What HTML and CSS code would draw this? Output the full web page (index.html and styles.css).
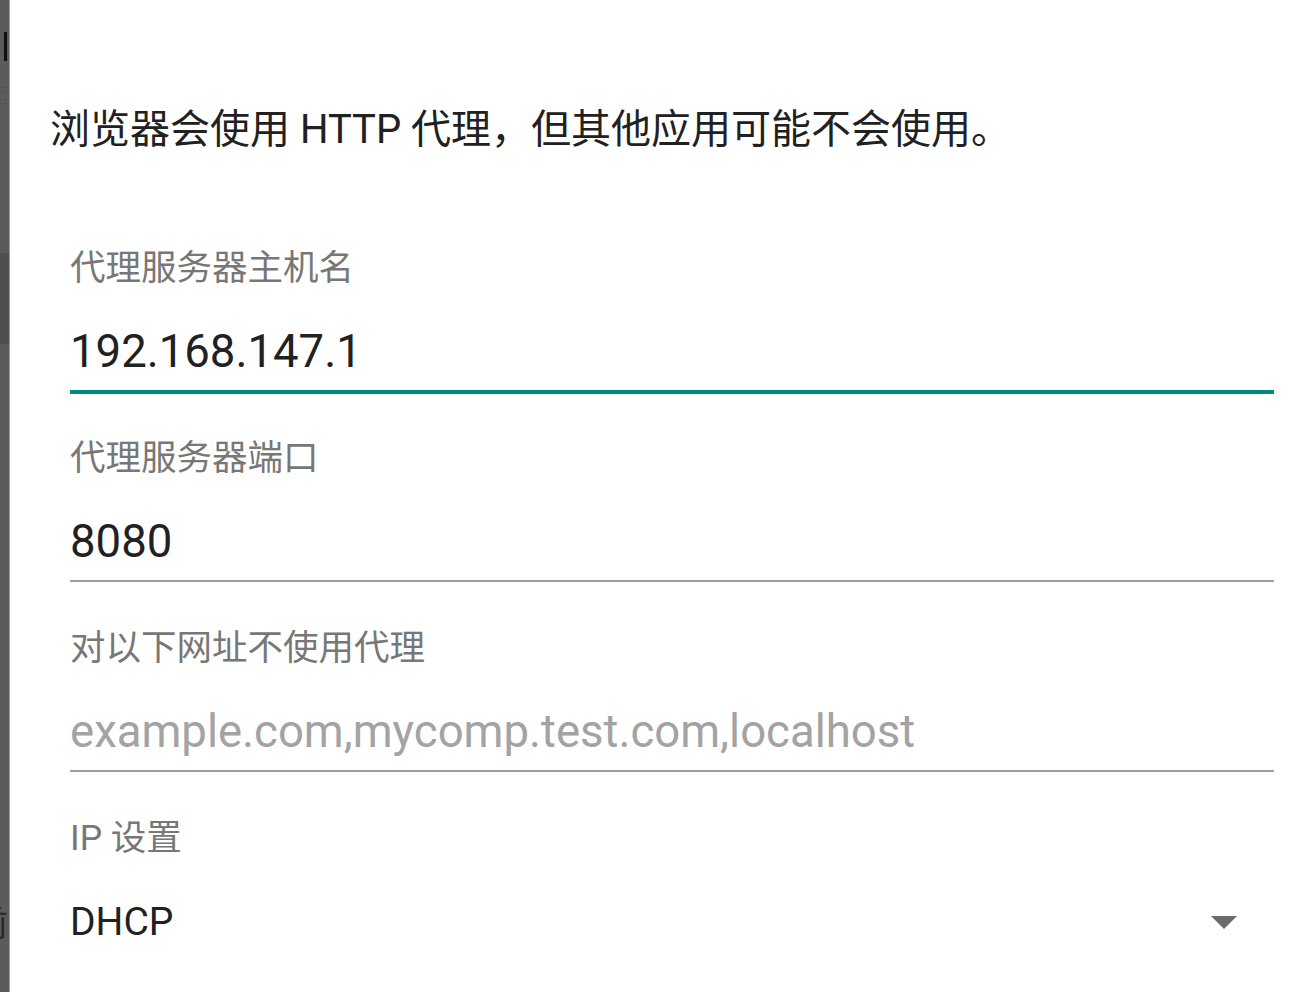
FILE: index.html
```html
<!DOCTYPE html>
<html lang="zh-CN">
<head>
    <meta charset="UTF-8">
    <meta name="viewport" content="width=device-width, initial-scale=1.0">
    <title>代理设置</title>
    <link rel="stylesheet" href="styles.css">
</head>
<body>

<div class="screen">
    <div class="backdrop">
        <div class="behind-bar"></div>
        <div class="behind-dots">: :<br>: :</div>
        <div class="behind-shade"></div>
        <div class="behind-glyph"><span>前</span></div>
    </div>

    <div class="dialog">
        <p class="note">浏览器会使用 HTTP 代理，但其他应用可能不会使用。</p>

        <div class="field focused">
            <div class="label">代理服务器主机名</div>
            <div class="value">192.168.147.1</div>
        </div>

        <div class="field">
            <div class="label">代理服务器端口</div>
            <div class="value">8080</div>
        </div>

        <div class="field">
            <div class="label">对以下网址不使用代理</div>
            <div class="value placeholder">example.com,mycomp.test.com,localhost</div>
        </div>

        <div class="field spinner">
            <div class="label">IP 设置</div>
            <div class="spinner-row">
                <div class="value">DHCP</div>
                <svg class="arrow" width="26" height="13" viewBox="0 0 26 13">
                    <path d="M0 0 H26 L13 13 Z" fill="#6b6b6b"/>
                </svg>
            </div>
        </div>
    </div>
</div>

</body>
</html>
```

FILE: styles.css
```css
body {
    margin: 0;
    background-color: #ffffff;
    font-family: Roboto, "Noto Sans CJK SC", sans-serif;
    overflow: hidden;
}
.screen {
    display: flex;
    width: 1300px;
    height: 992px;
}
.backdrop {
    width: 9px;
    flex-shrink: 0;
    background-color: #5b5b5b;
    border-right: 1px solid #9c9c9c;
    overflow: hidden;
}
.behind-bar {
    width: 3px;
    height: 29px;
    margin: 32px 0 0 4px;
    background-color: #111;
}
.behind-dots {
    margin-top: 22px;
    font-size: 9px;
    line-height: 12px;
    color: #333;
    white-space: nowrap;
}
.behind-shade {
    height: 91px;
    margin-top: 146px;
    background-color: #4f4f4f;
}
.behind-glyph {
    margin-top: 562px;
    width: 9px;
    overflow: hidden;
    font-size: 34px;
    line-height: 36px;
    color: #2a2a2a;
    white-space: nowrap;
}
.behind-glyph span {
    display: inline-block;
    margin-left: -26px;
}
.dialog {
    flex: 1;
    padding: 104px 26px 0 40px;
}
.note {
    margin: 0 0 92px;
    font-size: 40px;
    line-height: 52px;
    color: #212121;
    white-space: nowrap;
}
.field {
    margin-left: 20px;
    margin-bottom: 46px;
    border-bottom: 2px solid #9e9e9e;
}
.field.focused {
    border-bottom: 4px solid #00897b;
    margin-bottom: 44px;
}
.field.spinner {
    border-bottom: none;
}
.label {
    font-size: 35.5px;
    line-height: 40px;
    color: #777777;
}
.value {
    margin: 36px 0 10px;
    font-size: 45.5px;
    line-height: 56px;
    color: #212121;
    white-space: nowrap;
}
.value.placeholder {
    color: #a3a3a3;
}
.spinner-row {
    display: flex;
    align-items: center;
    justify-content: space-between;
}
.spinner-row .value {
    font-size: 39px;
}
.arrow {
    margin: 36px 37px 10px 0;
}
```
